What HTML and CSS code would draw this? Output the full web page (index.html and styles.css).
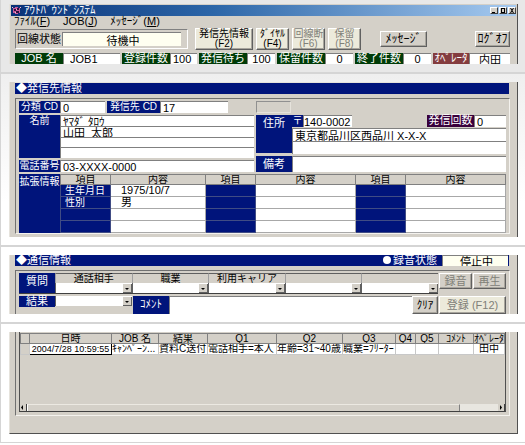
FILE: index.html
```
<!DOCTYPE html>
<html lang="ja">
<head>
  <meta charset="UTF-8">
  <meta name="viewport" content="width=device-width, initial-scale=1.0">
  <title>アウトバウンドシステム</title>
  <link rel="stylesheet" href="styles.css">
</head>
<body>
  <section class="part part-top">
    <div class="panel">
      <div class="titlebar">
        <svg class="app-icon" viewBox="0 0 9 9">
          <path d="M1 2h2V1h3v1h2v5H6v1H3V7H1z" fill="#c75a9c"/>
          <path d="M2 3h2v2H2zM5 2h2v2H5zM4 5h3v2H4z" fill="#301040"/>
          <path d="M0 1h1v1H0zM8 1h1v1H8zM4 3h1v1H4zM3 6h1v1H3z" fill="#f4b8d8"/>
        </svg>
        <h1>ｱｳﾄﾊﾞｳﾝﾄﾞｼｽﾃﾑ</h1>
        <div class="win-buttons">
          <button type="button" aria-label="最小化"><svg viewBox="0 0 6 5"><path d="M1 4h3v1H1z"/></svg></button>
          <button type="button" aria-label="最大化"><svg viewBox="0 0 6 5"><path d="M1 0h4v5H1zM2 1v3h2V1z" fill-rule="evenodd"/></svg></button>
          <button type="button" aria-label="閉じる"><svg viewBox="0 0 6 5"><path d="M1 0h1l1 1.500L4 0h1L3.500 2.500 5 5H4L3 3.500 2 5H1l1.500-2.500z"/></svg></button>
        </div>
      </div>
      <nav class="menu">
        <span>ﾌｧｲﾙ(<u>F</u>)</span>
        <span>JOB(<u>J</u>)</span>
        <span>ﾒｯｾｰｼﾞ(<u>M</u>)</span>
      </nav>
      <div class="toolbar">
        <div class="line-status">
          <label for="line">回線状態</label>
          <input class="cream" id="line" value="待機中" readonly>
        </div>
        <div class="calls">
          <button type="button" class="btn btn-cream btn-wide">発信先情報<br>(F2)</button>
          <button type="button" class="btn btn-cream">ﾀﾞｲﾔﾙ<br>(F4)</button>
          <button type="button" class="btn btn-cream" disabled>回線断<br>(F6)</button>
          <button type="button" class="btn btn-cream" disabled>保留<br>(F8)</button>
        </div>
        <button type="button" class="btn btn-msg">ﾒｯｾｰｼﾞ</button>
        <button type="button" class="btn btn-logoff">ﾛｸﾞｵﾌ</button>
      </div>
      <div class="counts">
        <div class="field"><label class="green" for="job">JOB 名</label><input class="indent" id="job" value="JOB1" readonly></div>
        <div class="field"><label class="green" for="c1">登録件数</label><input id="c1" value="100" readonly></div>
        <div class="field"><label class="green" for="c2">発信待ち</label><input class="center" id="c2" value="100" readonly></div>
        <div class="field"><label class="green" for="c3">保留件数</label><input class="center" id="c3" value="0" readonly></div>
        <div class="field"><label class="green" for="c4">終了件数</label><input class="center" id="c4" value="0" readonly></div>
        <div class="field"><label class="red" for="op">ｵﾍﾟﾚｰﾀ</label><input class="center" id="op" value="内田" readonly></div>
      </div>
    </div>
  </section>

  <section class="part part-info">
    <div class="panel">
      <div class="heading"><h2>◆発信先情報</h2></div>
      <div class="frame">
        <div class="cols">
          <div class="row">
            <label class="blue" for="cls">分類 CD</label><input class="in-cls" id="cls" value="0">
            <label class="blue lbl-dest" for="dest">発信先 CD</label><input class="in-dest" id="dest" value="17">
          </div>
          <div class="slot"></div>
          <div class="row row-name">
            <label class="blue" for="kana">名前</label>
            <div class="stack">
              <input id="kana" value="ﾔﾏﾀﾞ ﾀﾛｳ">
              <input aria-label="名前" value="山田  太郎">
              <input aria-label="名前 3">
              <input aria-label="名前 4">
            </div>
          </div>
          <div class="row row-address">
            <label class="blue lbl-side" for="addr">住所</label>
            <div class="address">
              <div class="zip">
                <label class="blue" for="zip">〒</label><input class="in-zip" id="zip" value="140-0002">
                <label class="purple" for="times">発信回数</label><input class="in-times" id="times" value="0">
              </div>
              <div class="stack">
                <input id="addr" value="東京都品川区西品川 X-X-X">
                <input aria-label="住所 2">
              </div>
            </div>
          </div>
          <div class="row row-phone">
            <label class="blue" for="tel">電話番号</label><input id="tel" value="03-XXXX-0000">
          </div>
          <div class="row row-note">
            <label class="blue lbl-side" for="note">備考</label><input id="note">
          </div>
        </div>
        <div class="extra">
          <div class="blue extra-label">拡張情報</div>
          <table class="extra-table">
            <colgroup>
              <col class="c-key"><col class="c-first"><col class="c-key"><col><col class="c-key"><col>
            </colgroup>
            <thead>
              <tr><th>項目</th><th>内容</th><th>項目</th><th>内容</th><th>項目</th><th>内容</th></tr>
            </thead>
            <tbody>
              <tr><td class="key">生年月日</td><td>1975/10/7</td><td class="key"></td><td></td><td class="key"></td><td></td></tr>
              <tr><td class="key">性別</td><td>男</td><td class="key"></td><td></td><td class="key"></td><td></td></tr>
              <tr><td class="key"></td><td></td><td class="key"></td><td></td><td class="key"></td><td></td></tr>
              <tr><td class="key"></td><td></td><td class="key"></td><td></td><td class="key"></td><td></td></tr>
            </tbody>
          </table>
        </div>
      </div>
    </div>
  </section>

  <section class="part">
    <div class="panel">
      <div class="heading heading-flush">
        <h2>◆通信情報</h2>
        <label for="rec"><span class="dot"></span>録音状態</label>
        <input class="cream" id="rec" value="停止中" readonly>
      </div>
      <div class="frame frame-open">
        <div class="talk">
          <div class="questions">
            <div class="blue q-label">質問</div>
            <div class="q"><label for="q1">通話相手</label><span class="drop"><select id="q1"><option></option></select></span></div>
            <div class="q"><label for="q2">職業</label><span class="drop"><select id="q2"><option></option></select></span></div>
            <div class="q"><label for="q3">利用キャリア</label><span class="drop"><select id="q3"><option></option></select></span></div>
            <div class="q"><label for="q4"></label><span class="drop"><select id="q4" aria-label="質問 4"><option></option></select></span></div>
            <div class="q"><label for="q5"></label><span class="drop"><select id="q5" aria-label="質問 5"><option></option></select></span></div>
          </div>
          <div class="rec-buttons">
            <button type="button" class="btn" disabled>録音</button>
            <button type="button" class="btn" disabled>再生</button>
          </div>
          <div class="outcome">
            <label class="blue lbl-result" for="result">結果</label>
            <span class="drop drop-result"><select id="result"><option></option></select></span>
            <label class="blue lbl-comment" for="comment">ｺﾒﾝﾄ</label>
            <input id="comment">
            <button type="button" class="btn btn-clear">ｸﾘｱ</button>
          </div>
          <button type="button" class="btn btn-cream" disabled>登録 (F12)</button>
        </div>
      </div>
    </div>
  </section>

  <section class="part part-last">
    <div class="panel panel-log">
      <div class="frame frame-log">
        <div class="log">
          <table class="log-table">
            <colgroup>
              <col class="l-head"><col class="l-date"><col class="l-job"><col class="l-res"><col class="l-q1"><col class="l-q2"><col class="l-q3"><col class="l-q4"><col class="l-q5"><col class="l-com"><col>
            </colgroup>
            <thead>
              <tr><th></th><th>日時</th><th>JOB 名</th><th>結果</th><th>Q1</th><th>Q2</th><th>Q3</th><th>Q4</th><th>Q5</th><th>ｺﾒﾝﾄ</th><th>ｵﾍﾟﾚｰﾀ</th></tr>
            </thead>
            <tbody>
              <tr><td class="rowhead"></td><td class="selected">2004/7/28 10:59:55</td><td>ｷｬﾝﾍﾟｰﾝ...</td><td>資料C送付</td><td>電話相手=本人</td><td>年齢=31~40歳</td><td>職業=ﾌﾘｰﾀｰ</td><td></td><td></td><td></td><td class="center">田中</td></tr>
            </tbody>
          </table>
          <div class="scroll">
            <button type="button" aria-label="左へ"><svg viewBox="0 0 5 5"><path d="M3 0v5L1 2.500z"/></svg></button>
            <div class="thumb"></div>
            <div class="track"></div>
            <button type="button" aria-label="右へ"><svg viewBox="0 0 5 5"><path d="M2 0v5l2-2.500z"/></svg></button>
          </div>
        </div>
      </div>
    </div>
  </section>
</body>
</html>
```
FILE: styles.css
```
* {
  box-sizing: border-box;
}
body {
  margin: 0;
  border-left: 1px solid #d5d5d5;
  background: #fff;
  color: #000;
  font-family: "Liberation Sans", "Noto Sans CJK JP", sans-serif;
  font-size: 11px;
  line-height: 11px;
}
h1, h2 {
  margin: 0;
  font-size: 11px;
  font-weight: normal;
  color: #fff;
  white-space: nowrap;
}
input, select, button {
  margin: 0;
  padding: 0;
  border: 0;
  border-radius: 0;
  min-width: 0;
  font: inherit;
  color: #000;
}
input {
  flex: 1;
  background: #fff;
  padding-left: 2px;
  border-top: 1px solid #808080;
  border-left: 1px solid #808080;
}
label {
  white-space: nowrap;
}

/* page parts */
.part {
  padding: 8px 7px 8px 8px;
  border-bottom: 2px solid #d5d5d5;
}
.part-top {
  padding-top: 4px;
  background: #e8e8e8;
}
.part-info {
  background: linear-gradient(#efefef, #fff 75%);
}
.part-last {
  border-bottom-width: 1px;
}
.panel {
  background: #d4d0c8;
  border-left: 1px solid #e6e3dc;
  border-right: 1px solid #505050;
}
.part-top .panel {
  padding-top: 1px;
}

/* colours shared by labels */
.blue, .green, .red, .purple {
  color: #fff;
  text-align: center;
}
.blue {
  background: #00147b;
}
.green {
  background: #003c08;
}
.red {
  background: #843c3f;
}
.purple {
  background: #38003c;
}
.cream {
  background: #fffff0;
  text-align: center;
}
.center {
  text-align: center;
  padding-left: 0;
}
.indent {
  padding-left: 6px;
}

/* buttons */
.btn {
  background: #d4d0c8;
  border: 1px solid #fff;
  border-right-color: #606060;
  border-bottom-color: #606060;
  box-shadow: inset -1px -1px #a8a59d;
  line-height: 10px;
  white-space: nowrap;
}
.btn-cream {
  background: #eceadb;
}
.btn:disabled {
  color: #808078;
}

/* window title and menu */
.titlebar {
  display: flex;
  align-items: center;
  height: 11px;
  margin: 0 1px;
  background: linear-gradient(90deg, #0a3278, #2c66a8 40%, #a6caf0);
  overflow: hidden;
}
.titlebar h1 {
  flex: 1;
}
.app-icon {
  width: 9px;
  height: 9px;
  margin: 0 3px 0 1px;
}
.win-buttons {
  display: flex;
  gap: 1px;
}
.win-buttons button {
  display: flex;
  width: 8px;
  height: 7px;
  background: #d4d0c8;
  border: 1px solid #fff;
  border-right-color: #404040;
  border-bottom-color: #404040;
}
.win-buttons svg {
  width: 6px;
  height: 5px;
}
.menu {
  display: flex;
  gap: 13px;
  height: 11px;
  padding-left: 4px;
}

/* toolbar */
.toolbar {
  display: flex;
  align-items: center;
  height: 24px;
  padding: 0 7px 0 5px;
}
.line-status {
  display: flex;
  align-items: center;
  flex: 0 1 173px;
  min-width: 0;
  height: 20px;
  padding: 2px 6px 2px 1px;
  gap: 1px;
  border: 1px solid #808080;
  border-right-color: #fff;
  border-bottom-color: #fff;
}
.line-status input {
  height: 14px;
}
.calls {
  display: flex;
  gap: 3px;
  margin: 0 19px 0 7px;
}
.calls .btn {
  width: 33px;
  height: 22px;
  font-size: 10px;
}
.calls .btn-wide {
  width: 58px;
}
.btn-msg {
  width: 47px;
  height: 16px;
  font-size: 12px;
}
.btn-logoff {
  width: 35px;
  height: 16px;
  margin-left: auto;
  font-size: 12px;
}
.counts {
  display: grid;
  grid-template-columns: 105fr 75fr 76fr 76fr 76fr 77fr;
  gap: 2px;
  padding: 2px 7px 0 5px;
}
.field {
  display: flex;
  min-width: 0;
  height: 11px;
}
.field label {
  width: 48px;
}
.field .red {
  width: 36px;
}

/* section heading */
.heading {
  display: flex;
  height: 12px;
  margin: 0 8px 4px 5px;
  padding: 0 1px;
  background: #00147b;
  border-top: 1px solid #e6e3dc;
}
.heading h2 {
  flex: 1;
}
.heading label {
  color: #fff;
  margin-right: 5px;
}
.heading input {
  flex: 0 0 66px;
}
.heading-flush {
  height: 11px;
  border-top: 0;
}
.dot {
  display: inline-block;
  width: 8px;
  height: 8px;
  margin-right: 2px;
  border-radius: 50%;
  background: #fff;
}
.frame {
  margin: 0 7px 0 5px;
  padding: 2px 3px 0 3px;
  border: 1px solid #707070;
  border-right-color: #f4f2ee;
  border-bottom-color: #f4f2ee;
}

/* customer details */
.part-info .panel {
  padding-bottom: 3px;
}
.cols {
  display: grid;
  grid-template-columns: 235fr 250fr;
  grid-template-rows: 12px 43px 12px;
  gap: 2px;
}
.row {
  display: flex;
  min-width: 0;
}
.row .blue {
  flex: 0 0 41px;
  font-size: 10px;
}
.row .lbl-dest {
  flex-basis: 53px;
  margin-left: 2px;
}
.row .lbl-side {
  flex-basis: 36px;
  font-size: 11px;
}
.in-cls {
  flex: 0 0 45px;
}
.in-dest {
  flex: 0 0 68px;
}
.slot {
  width: 35px;
  border: 1px solid #909090;
  border-right-color: #e6e3dc;
  border-bottom-color: #e6e3dc;
}
.stack {
  display: flex;
  flex: 1;
  flex-direction: column;
  min-width: 0;
}
.stack input {
  flex: 1;
  min-height: 0;
  line-height: 10px;
}
.row-address .blue {
  line-height: 11px;
}
.row-address .lbl-side {
  line-height: 16px;
  margin-bottom: 5px;
}
.address {
  display: flex;
  flex: 1;
  flex-direction: column;
  gap: 1px;
  padding-bottom: 6px;
  min-width: 0;
}
.zip {
  display: flex;
  height: 12px;
}
.zip .blue {
  flex-basis: 11px;
}
.in-zip {
  flex: 0 0 49px;
  padding-left: 0;
}
.purple {
  width: 47px;
  margin-left: auto;
}
.in-times {
  flex: 0 0 32px;
}
.row-note {
  margin-top: -4px;
}
.row-note .blue {
  line-height: 16px;
}
.extra {
  display: flex;
  margin-top: 2px;
}
.extra-label {
  flex: 0 0 41px;
  font-size: 10px;
  line-height: 16px;
}
table {
  width: 100%;
  table-layout: fixed;
  border-collapse: collapse;
}
th, td {
  padding: 0;
  overflow: hidden;
  white-space: nowrap;
}
th {
  height: 10px;
  font-size: 10px;
  font-weight: normal;
  line-height: 9px;
  background: #d4d0c8;
  border: 1px solid #808080;
}
.extra-table td {
  height: 12px;
  padding-left: 10px;
  background: #fff;
  border: 1px solid #a8a8a8;
}
.extra-table .key {
  padding-left: 4px;
  font-size: 10px;
  color: #fff;
  background: #00147b;
  border-color: #404c84;
}
.c-key {
  width: 50px;
}
.c-first {
  width: 95px;
}

/* call details */
.frame-open {
  padding-bottom: 0;
  border-bottom: 0;
}
.talk {
  display: grid;
  grid-template-columns: 1fr 67px;
  grid-template-rows: 21px 18px;
  column-gap: 1px;
  row-gap: 2px;
}
.questions {
  display: flex;
  border-bottom: 1px solid #404040;
}
.q-label {
  flex: 0 0 36px;
  line-height: 16px;
}
.q {
  flex: 1;
  min-width: 0;
}
.q label {
  display: block;
  height: 10px;
  font-size: 10px;
  line-height: 10px;
  text-align: center;
  border-top: 1px solid #606060;
  border-left: 1px solid #a0a0a0;
}
.drop {
  display: block;
  position: relative;
  height: 10px;
}
.drop select {
  display: block;
  width: 100%;
  height: 100%;
  appearance: none;
  background: #fff;
  border-left: 1px solid #606060;
}
.drop::before {
  content: "";
  position: absolute;
  top: 1px;
  right: 0;
  bottom: 0;
  width: 8px;
  background: #d4d0c8;
  border-right: 1px solid #606060;
  border-bottom: 1px solid #606060;
  pointer-events: none;
}
.drop::after {
  content: "";
  position: absolute;
  top: 5px;
  right: 3px;
  border: 2px solid transparent;
  border-top-color: #000;
  border-bottom: 0;
  pointer-events: none;
}
.rec-buttons {
  display: grid;
  grid-template-columns: 1fr 1fr;
  gap: 1px;
  padding-bottom: 5px;
}
.outcome {
  display: flex;
  min-width: 0;
}
.lbl-result {
  flex: 0 0 36px;
  height: 11px;
  line-height: 11px;
}
.drop-result {
  flex: 0 0 77px;
}
.lbl-comment {
  flex: 0 0 36px;
  margin-left: 1px;
  line-height: 16px;
}
.btn-clear {
  flex: 0 0 26px;
}

/* call log */
.panel-log {
  padding-bottom: 17px;
  border-bottom: 1px solid #505050;
}
.frame-log {
  padding-top: 0;
  padding-bottom: 3px;
  border-top: 0;
}
.log {
  display: flex;
  flex-direction: column;
  justify-content: space-between;
  min-height: 80px;
  padding-top: 1px;
  border-left: 1px solid #505050;
  border-right: 1px solid #505050;
  border-bottom: 1px solid #404040;
}
.log-table td {
  height: 11px;
  font-size: 10px;
  line-height: 10px;
  background: #fff;
  border: 1px solid #c8c8c8;
}
.log-table .rowhead {
  background: #d4d0c8;
}
.log-table .selected {
  font-size: 9px;
  text-align: center;
  border: 1px solid #000;
}
.l-head { width: 9px; }
.l-date { width: 82px; }
.l-job { width: 47px; }
.l-res { width: 49px; }
.l-q1 { width: 69px; }
.l-q2 { width: 66px; }
.l-q3 { width: 53px; }
.l-q4 { width: 20px; }
.l-q5 { width: 23px; }
.l-com { width: 35px; }
.scroll {
  display: flex;
  height: 7px;
  background: #e8e6e0;
}
.scroll button {
  display: flex;
  align-items: center;
  width: 7px;
  background: #d4d0c8;
  border-right: 1px solid #404040;
}
.scroll svg {
  width: 5px;
  height: 5px;
}
.thumb {
  flex: 434;
  background: #d4d0c8;
  border-top: 1px solid #ece9e2;
  border-left: 1px solid #fff;
  border-right: 1px solid #808080;
}
.track {
  flex: 38;
}
```
